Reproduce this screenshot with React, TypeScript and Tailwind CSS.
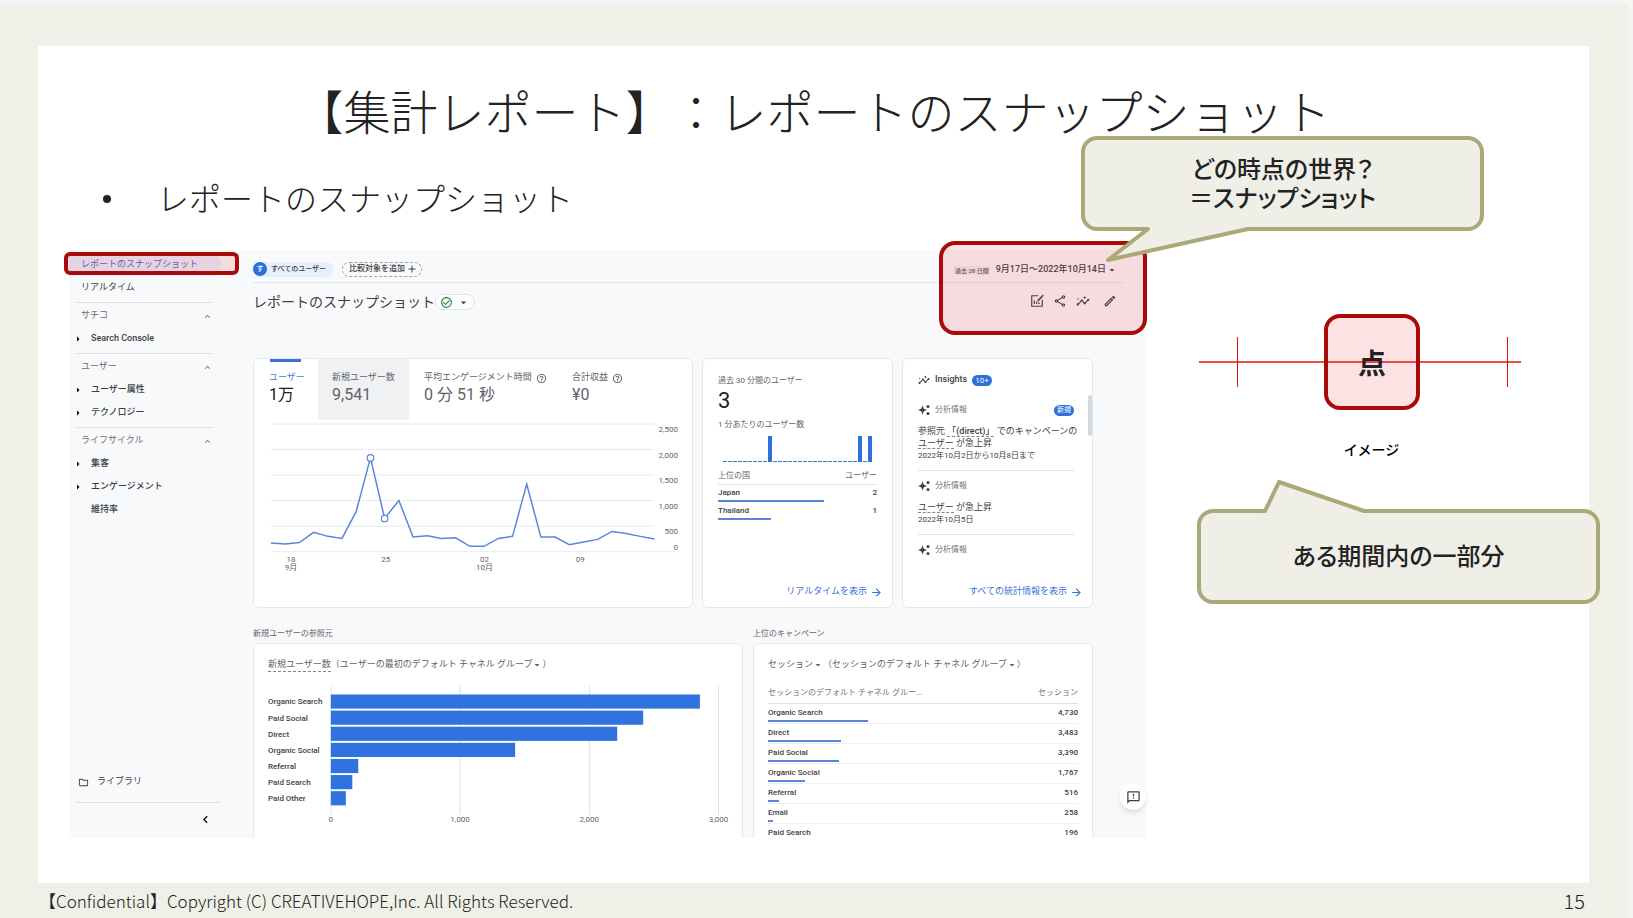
import type { ReactNode } from "react";
import {
  MdAdd,
  MdArrowDropDown,
  MdArrowForward,
  MdArrowRight,
  MdCheckCircleOutline,
  MdChevronLeft,
  MdExpandLess,
  MdHelpOutline,
  MdInsights,
  MdOutlineEdit,
  MdOutlineFeedback,
  MdOutlineFolder,
  MdOutlineShare,
} from "react-icons/md";

const sidebar = [
  { title: "サチコ", items: [{ label: "Search Console", open: true }] },
  {
    title: "ユーザー",
    items: [
      { label: "ユーザー属性", open: true },
      { label: "テクノロジー", open: true },
    ],
  },
  {
    title: "ライフサイクル",
    items: [
      { label: "集客", open: true },
      { label: "エンゲージメント", open: true },
      { label: "維持率", open: false },
    ],
  },
];

const daily = [
  170, 150, 180, 378, 300, 260, 788, 1836, 651, 1003, 286, 312, 260, 273, 104,
  104, 260, 300, 1322, 286, 286, 137, 189, 241, 397, 358, 300, 247,
];

const channels = [
  { name: "Organic Search", value: 2856 },
  { name: "Paid Social", value: 2417 },
  { name: "Direct", value: 2216 },
  { name: "Organic Social", value: 1426 },
  { name: "Referral", value: 212 },
  { name: "Paid Search", value: 166 },
  { name: "Paid Other", value: 116 },
];

const countries = [
  { name: "Japan", users: 2 },
  { name: "Thailand", users: 1 },
];

const sessions = [
  { name: "Organic Search", value: 4730 },
  { name: "Direct", value: 3483 },
  { name: "Paid Social", value: 3390 },
  { name: "Organic Social", value: 1767 },
  { name: "Referral", value: 516 },
  { name: "Email", value: 258 },
  { name: "Paid Search", value: 196 },
];

const totalSessions = 14700;

function Card({ className = "", children }: { className?: string; children: ReactNode }) {
  return (
    <section className={`relative rounded-md border border-[#e4e7eb] bg-white ${className}`}>
      {children}
    </section>
  );
}

function Sparkle() {
  return (
    <svg viewBox="0 0 24 24" className="size-3 shrink-0 fill-[#3c4043]" aria-hidden="true">
      <path d="M9 3l2.600 6.400L18 12l-6.400 2.600L9 21l-2.600-6.400L0 12l6.400-2.600z" />
      <circle cx="20" cy="5" r="3" />
      <circle cx="20" cy="19" r="3" />
    </svg>
  );
}

function ChartEdit() {
  return (
    <svg viewBox="0 0 24 24" className="size-[14px]" fill="none" stroke="currentColor" strokeWidth="2" aria-hidden="true">
      <path d="M14 3H3v18h18V10" />
      <path d="M7.500 11v6M11.500 13v4M15.500 14v3" />
      <path d="M13 12l8-8" strokeWidth="3" />
      <path d="M21 2l1.500 1.500" strokeWidth="3" />
    </svg>
  );
}

function Sidebar() {
  return (
    <nav className="flex w-[184px] shrink-0 flex-col pt-[3px] pl-[7px] text-[9px] text-[#3c4043]">
      <a href="#snapshot" className="mr-8 -ml-[7px] flex h-[23px] items-center rounded-r-full bg-[#e6edfb] pl-3 text-[#3f6fd0]">
        レポートのスナップショット
      </a>
      <a href="#realtime" className="flex h-[23px] items-center pl-[5px]">
        リアルタイム
      </a>
      {sidebar.map((group) => (
        <div key={group.title} className="mr-10">
          <div className="mt-[3px] mb-px h-px bg-[#dfe2e6]" />
          <button className="flex h-[23px] w-full items-center justify-between pt-px pl-[5px] text-[#6b7075]">
            {group.title}
            <MdExpandLess size={11} />
          </button>
          {group.items.map((item) => (
            <a key={item.label} href="#report" className="flex h-[23px] items-center font-medium">
              <span className="-ml-1 w-[19px]">{item.open && <MdArrowRight size={12} className="text-black" />}</span>
              {item.label}
            </a>
          ))}
        </div>
      ))}
      <div className="mt-auto mr-8">
        <a href="#library" className="flex h-10 items-center gap-2 pl-[2px]">
          <MdOutlineFolder size={11} />
          ライブラリ
        </a>
        <div className="h-px bg-[#dfe2e6]" />
        <button aria-label="閉じる" className="flex h-[35px] w-full items-center justify-end pr-2 pb-[2px] text-black">
          <MdChevronLeft size={15} />
        </button>
      </div>
    </nav>
  );
}

function Toolbar() {
  return (
    <header className="pt-[11px] pr-[23px] text-[#3c4043]">
      <div className="flex h-4 items-center text-[8px] font-medium">
        <button className="flex h-[15px] items-center gap-1 rounded-full bg-[#e8effc] pr-2 text-[7px]">
          <span className="grid size-[14px] place-items-center rounded-full bg-[#2f6fdb] text-white">す</span>
          すべてのユーザー
        </button>
        <button className="ml-2 flex h-[15px] items-center gap-px rounded-full border border-dashed border-[#a0a4a8] pr-[3px] pl-[6px] text-[8px]">
          比較対象を追加
          <MdAdd size={12} />
        </button>
        <button className="mr-[5px] ml-auto flex items-center gap-[6px] pt-[2px] text-[9px]">
          <span className="bg-[#eceef1] px-px text-[6px] text-[#5f6368]">過去 28 日間</span>
          <span className="flex items-center">
            9月17日～2022年10月14日
            <MdArrowDropDown size={12} />
          </span>
        </button>
      </div>
      <div className="mt-[5px] h-px bg-[#e2e5e9]" />
      <div className="mt-[11px] flex h-4 items-center">
        <h2 className="text-[14px]">レポートのスナップショット</h2>
        <button aria-label="ステータス" className="flex h-4 items-center gap-1 rounded-full border border-[#e1e4e8] bg-white px-1">
          <MdCheckCircleOutline size={13} className="text-[#2f8a45]" />
          <MdArrowDropDown size={13} />
        </button>
        <div className="mr-[6px] ml-auto flex items-center gap-[9px] pb-[3px]">
          <button aria-label="カスタマイズ"><ChartEdit /></button>
          <button aria-label="共有"><MdOutlineShare size={14} /></button>
          <button aria-label="インサイト"><MdInsights size={14} /></button>
          <button aria-label="編集" className="ml-1"><MdOutlineEdit size={14} /></button>
        </div>
      </div>
    </header>
  );
}

function Metric({ label, value, help }: { label: string; value: string; help?: boolean }) {
  return (
    <>
      <span className="flex h-3 items-center gap-1 whitespace-nowrap">
        {label}
        {help && <MdHelpOutline size={11} />}
      </span>
      <span className="flex h-[22px] items-center text-[16px] whitespace-nowrap">{value}</span>
    </>
  );
}

function UsersChart() {
  const x = (i: number) => (i * 384.5) / 27;
  const y = (v: number) => 129 - (v / 2500) * 128;
  const points = daily.map((v, i) => `${x(i)},${y(v)}`).join(" ");
  return (
    <svg viewBox="0 0 408 152" className="block w-full overflow-visible fill-[#5f6368] text-[8px]">
      {[2500, 2000, 1500, 1000, 500, 0].map((v) => (
        <g key={v}>
          <line x1="0" x2={v === 0 ? 408 : 384} y1={y(v)} y2={y(v)} stroke="#e8eaed" />
          <text x="408" y={v === 0 ? 127 : y(v) + 8} textAnchor="end">
            {v.toLocaleString("en-US")}
          </text>
        </g>
      ))}
      <polyline points={points} fill="none" stroke="#5a86d8" strokeWidth="1.500" />
      {[7, 8].map((i) => (
        <circle key={i} cx={x(i)} cy={y(daily[i])} r="3.300" fill="#fff" stroke="#5a86d8" strokeWidth="1.200" />
      ))}
      <g textAnchor="middle">
        <text x="20" y="139">18</text>
        <text x="20" y="147">9月</text>
        <text x="115" y="139">25</text>
        <text x="214" y="139">02</text>
        <text x="214" y="147">10月</text>
        <text x="310" y="139">09</text>
      </g>
    </svg>
  );
}

function UsersCard() {
  return (
    <Card>
      <div className="flex h-[61px] text-left text-[9px] text-[#5f6368]">
        <button className="relative flex w-16 flex-col pt-[13px] pl-[15px] text-left text-[#202124]">
          <span className="absolute top-0 left-4 h-[3px] w-[31px] bg-[#3871d8]" />
          <span className="flex h-3 items-center whitespace-nowrap text-[#4a80dc]">ユーザー</span>
          <span className="flex h-[22px] items-center text-[16px]">1万</span>
        </button>
        <button className="flex w-[91px] flex-col bg-[#f0f1f3] pt-[13px] pl-[14px] text-left">
          <Metric label="新規ユーザー数" value="9,541" />
        </button>
        <button className="flex w-[148px] flex-col pt-[13px] pl-[15px] text-left">
          <Metric label="平均エンゲージメント時間" value="0 分 51 秒" help />
        </button>
        <button className="flex flex-col pt-[13px] pl-[15px] text-left">
          <Metric label="合計収益" value="¥0" help />
        </button>
      </div>
      <div className="pt-[3px] pr-[14px] pl-[17px]">
        <UsersChart />
      </div>
    </Card>
  );
}

function RealtimeCard() {
  return (
    <Card className="flex flex-col px-[15px] pt-4 text-[8px] text-[#5f6368]">
      <h3 className="h-3 leading-3">過去 30 分間のユーザー</h3>
      <p className="h-7 text-[22px] leading-7 text-[#202124]">3</p>
      <p className="mt-1 h-3 leading-3">1 分あたりのユーザー数</p>
      <svg viewBox="0 0 159 26" className="mt-[5px] block w-full" aria-hidden="true">
        <line x1="5" x2="155" y1="25.500" y2="25.500" stroke="#3871d8" strokeDasharray="4 1" />
        {[9, 27, 29].map((slot) => (
          <rect key={slot} x={5 + slot * 5} y="0" width="4" height="26" fill="#2f6fdb" />
        ))}
      </svg>
      <table className="mt-[6px] w-full">
        <thead>
          <tr className="h-4 border-b border-[#dfe2e6]">
            <th className="text-left font-normal">上位の国</th>
            <th className="text-right font-normal">ユーザー</th>
          </tr>
        </thead>
        <tbody className="font-medium text-[#3c4043]">
          {countries.map((c) => (
            <tr key={c.name} className="relative h-[18px]">
              <td>
                {c.name}
                <span
                  className="absolute bottom-0 left-0 h-[2px] bg-[#5a86d8]"
                  style={{ width: `${(c.users / 3) * 100}%` }}
                />
              </td>
              <td className="text-right">{c.users}</td>
            </tr>
          ))}
        </tbody>
      </table>
      <CardLink>リアルタイムを表示</CardLink>
    </Card>
  );
}

function CardLink({ children }: { children: ReactNode }) {
  return (
    <a href="#more" className="-mr-[6px] mt-auto mb-[9px] flex h-3 items-center justify-end gap-[3px] text-[9px] whitespace-nowrap text-[#3871d8]">
      {children}
      <MdArrowForward size={13} />
    </a>
  );
}

function InsightHeader({ badge }: { badge?: string }) {
  return (
    <div className="flex h-3 items-center gap-[5px] text-[8px] text-[#70757a]">
      <Sparkle />
      分析情報
      {badge && <span className="ml-auto rounded-full bg-[#2f6fdb] px-[3px] text-[7px] leading-[11px] text-white">{badge}</span>}
    </div>
  );
}

function InsightsCard() {
  return (
    <Card className="flex flex-col px-[15px] pt-[15px] text-[#3c4043]">
      <span className="absolute top-9 right-0 h-[41px] w-1 rounded-full bg-[#d5d8dc]" />
      <h3 className="flex h-3 items-center gap-[5px] text-[9px] font-medium">
        <MdInsights size={12} />
        Insights
        <span className="rounded-full bg-[#2f6fdb] px-[3px] text-[8px] leading-[11px] font-normal text-white">10+</span>
      </h3>
      <div className="mt-[18px] mr-[3px]">
        <InsightHeader badge="新規" />
        <p className="mt-[9px] text-[9px] leading-3 whitespace-nowrap">
          参照元 <span className="border-b border-dashed border-[#80868b] font-medium">「(direct)」</span> でのキャンペーンの
          <br />
          <span className="border-b border-dashed border-[#80868b]">ユーザー</span> が急上昇
        </p>
        <p className="mt-px text-[8px] leading-3">2022年10月2日から10月8日まで</p>
        <div className="mt-2 h-px bg-[#dfe2e6]" />
        <div className="mt-[9px]">
          <InsightHeader />
        </div>
        <p className="mt-[9px] text-[9px] leading-3">
          <span className="border-b border-dashed border-[#80868b]">ユーザー</span> が急上昇
        </p>
        <p className="mt-px text-[8px] leading-3">2022年10月5日</p>
        <div className="mt-2 h-px bg-[#dfe2e6]" />
        <div className="mt-[9px]">
          <InsightHeader />
        </div>
      </div>
      <CardLink>すべての統計情報を表示</CardLink>
    </Card>
  );
}

function ChannelChart() {
  const x = (v: number) => 63 + v * 0.1295;
  return (
    <svg viewBox="0 0 460 142" className="block w-full overflow-visible fill-[#3c4043] text-[8px]">
      {[0, 1000, 2000, 3000].map((v) => (
        <g key={v}>
          <line x1={x(v)} x2={x(v)} y1="0" y2="129" stroke="#dfe2e6" />
          <text x={x(v)} y="136" textAnchor="middle" className="fill-[#5f6368]">
            {v.toLocaleString("en-US")}
          </text>
        </g>
      ))}
      {channels.map((c, i) => (
        <g key={c.name}>
          <text x="0" y={18.500 + i * 16.150} className="font-medium">{c.name}</text>
          <rect x="63" y={8.500 + i * 16.150} width={x(c.value) - 63} height="14.200" fill="#3173de" />
        </g>
      ))}
    </svg>
  );
}

function SessionsTable() {
  return (
    <table className="mt-[13px] w-full text-[8px] text-[#3c4043]">
      <thead>
        <tr className="h-[19px] border-b border-[#dfe2e6] text-[#70757a]">
          <th className="text-left font-normal">セッションのデフォルト チャネル グルー...</th>
          <th className="text-right font-normal">セッション</th>
        </tr>
      </thead>
      <tbody className="font-medium">
        {sessions.map((s) => (
          <tr key={s.name} className="relative h-5 border-b border-[#eef0f2]">
            <td>
              {s.name}
              <span
                className="absolute bottom-0 left-0 h-[2px] bg-[#5a86d8]"
                style={{ width: `${(s.value / totalSessions) * 100}%` }}
              />
            </td>
            <td className="text-right">{s.value.toLocaleString("en-US")}</td>
          </tr>
        ))}
      </tbody>
    </table>
  );
}

function Dashboard() {
  return (
    <div className="relative">
      <div className="flex h-[588px] overflow-hidden bg-[#f8f9fb] font-[Roboto,'Noto_Sans_CJK_JP',sans-serif]">
        <Sidebar />
        <main className="min-w-0 flex-1">
          <Toolbar />
          <div className="mt-[48px] mr-[53px] grid h-[250px] grid-cols-[minmax(0,440fr)_minmax(0,191fr)_minmax(0,191fr)] gap-[9px]">
            <UsersCard />
            <RealtimeCard />
            <InsightsCard />
          </div>
          <div className="mt-[19px] mr-[53px] grid grid-cols-[minmax(0,490fr)_minmax(0,340fr)] gap-x-[10px] text-[#5f6368]">
            <h3 className="h-4 text-[8px] leading-[14px]">新規ユーザーの参照元</h3>
            <h3 className="h-4 text-[8px] leading-[14px]">上位のキャンペーン</h3>
            <Card className="pt-[15px] pr-[15px] pl-[14px]">
              <p className="flex h-3 items-center text-[9px] whitespace-nowrap">
                <span className="border-b border-dashed border-[#80868b]">新規ユーザー数</span>
                （ユーザーの最初のデフォルト チャネル グループ
                <MdArrowDropDown size={12} className="-mx-px" />）
              </p>
              <div className="mt-[15px]">
                <ChannelChart />
              </div>
            </Card>
            <Card className="px-[14px] pt-[15px]">
              <p className="flex h-3 items-center text-[9px] whitespace-nowrap">
                セッション
                <MdArrowDropDown size={12} className="-mx-px" />
                （セッションのデフォルト チャネル グループ
                <MdArrowDropDown size={12} className="-mx-px" />）
              </p>
              <SessionsTable />
            </Card>
          </div>
        </main>
      </div>
      <button aria-label="フィードバック" className="absolute right-0 bottom-7 grid size-[26px] place-items-center rounded-full bg-white text-[#3c4043] shadow-md">
        <MdOutlineFeedback size={15} />
      </button>
      {/* red marks over the menu item and the date range */}
      <div className="absolute top-[2px] -left-[5px] h-[23px] w-[175px] rounded-md border-4 border-[#a90b0b] bg-[#ee1c25]/[0.13]" />
      <div className="absolute -top-[9px] -right-px h-[94px] w-[208px] rounded-2xl border-4 border-[#a90b0b] bg-[#ee1c25]/[0.13]" />
    </div>
  );
}

// `base` closes the tail's opening inside the border, `tail` is its visible outline
function Bubble({ tail, base, children }: { tail: string; base: string; children: ReactNode }) {
  return (
    <div className="relative">
      <div className="grid h-[95px] place-items-center rounded-2xl border-4 border-[#aba977] bg-[#efefe8] pb-1 text-center text-[24px] leading-[29px] font-medium text-[#222] [font-feature-settings:'palt']">
        <p>{children}</p>
      </div>
      <svg className="absolute top-0 left-0 h-[95px] w-[403px] overflow-visible" viewBox="0 0 403 95" aria-hidden="true">
        <polygon points={`${base} ${tail}`} fill="#efefe8" />
        <polyline points={tail} fill="none" stroke="#aba977" strokeWidth="4" strokeLinecap="round" strokeLinejoin="round" />
      </svg>
    </div>
  );
}

function Timeline() {
  return (
    <div className="relative mr-[79px] ml-[2px] flex h-24 items-center">
      <div className="h-[2px] w-full bg-[#ef4a48]" />
      <div className="absolute left-[38px] h-[50px] w-px bg-[#e00f14]" />
      <div className="absolute right-[13px] h-[50px] w-px bg-[#e00f14]" />
      <div className="absolute left-[125px] grid size-24 place-items-center rounded-2xl border-4 border-[#a90b0b] bg-[#ee1c25]/[0.13] text-[28px] font-bold text-[#222]">
        点
      </div>
    </div>
  );
}

export default function App() {
  return (
    <div className="min-h-screen bg-[#f4f4f4] pt-[5px] pr-[5px] font-['Noto_Sans_CJK_JP',sans-serif] text-[#222]">
      <div className="bg-[#eff0e8] pt-[41px] pr-[39px] pl-[38px]">
        <article className="relative bg-white pt-9 pb-[45px] pl-[31px]">
          <h1 className="pr-[31px] text-center text-[47px] leading-[56px] font-light [text-spacing-trim:space-all]">
            【集計レポート】：レポートのスナップショット
          </h1>
          <ul className="mt-[39px] mb-[33px] pl-[34px] text-[32px] leading-10 font-light">
            <li className="flex items-center">
              <span className="mt-1 mr-[46px] size-2 rounded-full bg-[#222]" />
              レポートのスナップショット
            </li>
          </ul>
          <div className="grid grid-cols-[1077fr_443fr]">
            <Dashboard />
            <aside className="-mr-[11px] pt-16 pl-[51px]">
              <Timeline />
              <p className="mt-[29px] mr-[54px] text-center text-[14px] leading-5 font-medium text-black">イメージ</p>
              <div className="mt-[50px]">
                <Bubble base="167,8 68,8" tail="68,2 82,-27 167,2">ある期間内の一部分</Bubble>
              </div>
            </aside>
          </div>
          <div className="absolute top-[90px] right-[105px] w-[403px]">
            <Bubble base="167,87 67,87" tail="67,93 27,124 167,93">
              どの時点の世界？
              <br />
              ＝スナップショット
            </Bubble>
          </div>
        </article>
        <footer className="flex h-[35px] items-center justify-between pl-px font-light">
          <span className="text-[17px]">【Confidential】Copyright (C) CREATIVEHOPE,Inc. All Rights Reserved.</span>
          <span className="pr-1 text-[20px]">15</span>
        </footer>
      </div>
    </div>
  );
}
